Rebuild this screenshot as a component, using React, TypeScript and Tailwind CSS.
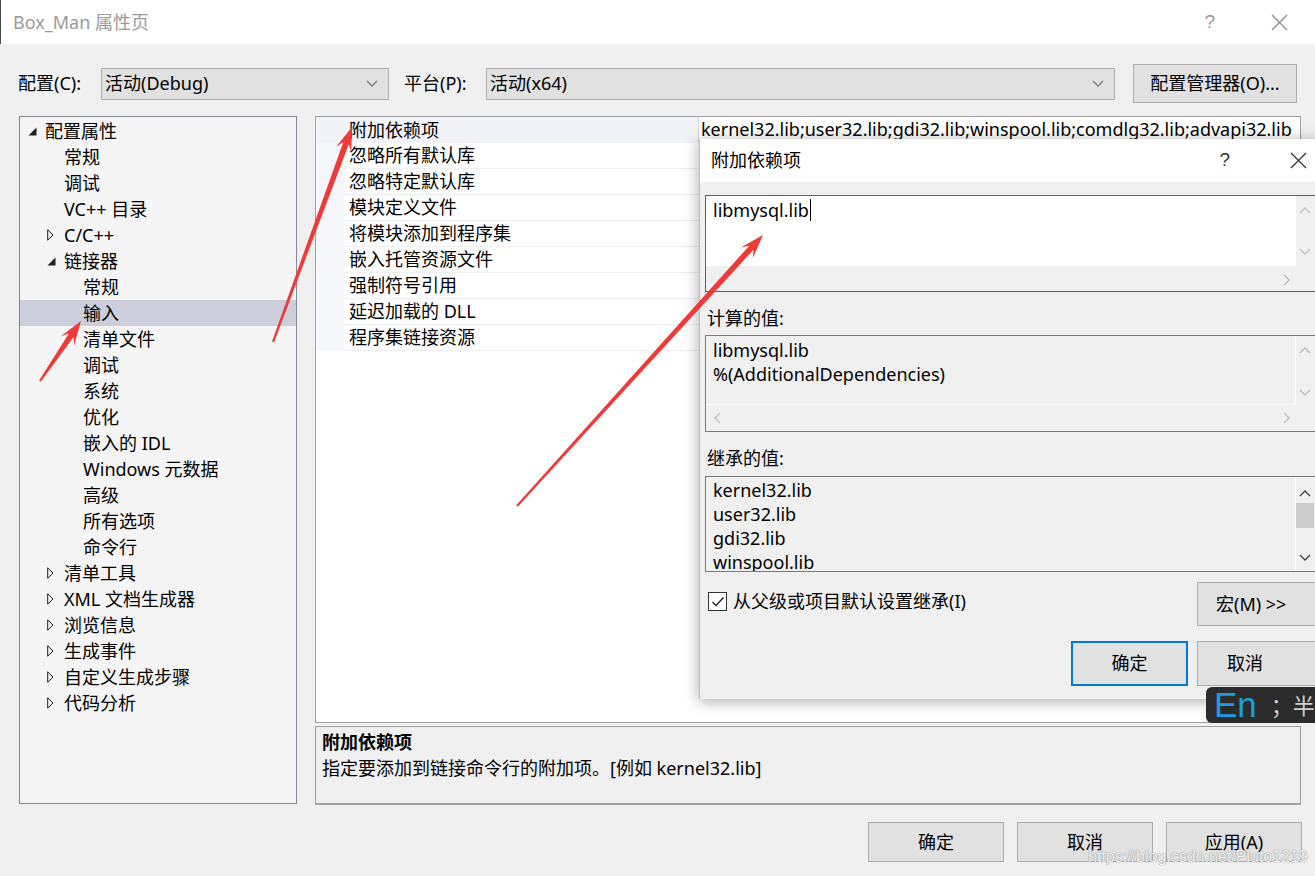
import React from "react";

type Dir = "up" | "down" | "left" | "right";
function Chev({ dir, color }: { dir: Dir; color: string }) {
  const pts = {
    up: "1,7 6,2 11,7",
    down: "1,2 6,7 11,2",
    left: "7,1 2,6 7,11",
    right: "2,1 7,6 2,11",
  }[dir];
  const horiz = dir === "up" || dir === "down";
  return (
    <svg width={horiz ? 12 : 9} height={horiz ? 9 : 12} viewBox={horiz ? "0 0 12 9" : "0 0 9 12"}>
      <polyline points={pts} fill="none" stroke={color} strokeWidth="1.3" />
    </svg>
  );
}

function XIcon({ color, size = 17 }: { color: string; size?: number }) {
  return (
    <svg width={size} height={size} viewBox="0 0 17 17">
      <line x1="1" y1="1" x2="16" y2="16" stroke={color} strokeWidth="1.2" />
      <line x1="16" y1="1" x2="1" y2="16" stroke={color} strokeWidth="1.2" />
    </svg>
  );
}

function arrowPoints(tx: number, ty: number, px: number, py: number) {
  const dx = px - tx;
  const dy = py - ty;
  const len = Math.hypot(dx, dy);
  const ux = dx / len;
  const uy = dy / len;
  const nx = -uy;
  const ny = ux;
  const headLen = 24;
  const hw = 8;
  const neckX = px - ux * headLen * 0.72;
  const neckY = py - uy * headLen * 0.72;
  const bx = px - ux * headLen;
  const by = py - uy * headLen;
  const w0 = 1.1;
  const w1 = 2.9;
  const p = [
    [tx + nx * w0, ty + ny * w0],
    [neckX + nx * w1, neckY + ny * w1],
    [bx + nx * hw, by + ny * hw],
    [px, py],
    [bx - nx * hw, by - ny * hw],
    [neckX - nx * w1, neckY - ny * w1],
    [tx - nx * w0, ty - ny * w0],
  ];
  return p.map((q) => q[0].toFixed(1) + "," + q[1].toFixed(1)).join(" ");
}

type TreeItem = { label: string; level: number; toggle?: "open" | "closed"; selected?: boolean };
const tree: TreeItem[] = [
  { label: "配置属性", level: 0, toggle: "open" },
  { label: "常规", level: 1 },
  { label: "调试", level: 1 },
  { label: "VC++ 目录", level: 1 },
  { label: "C/C++", level: 1, toggle: "closed" },
  { label: "链接器", level: 1, toggle: "open" },
  { label: "常规", level: 2 },
  { label: "输入", level: 2, selected: true },
  { label: "清单文件", level: 2 },
  { label: "调试", level: 2 },
  { label: "系统", level: 2 },
  { label: "优化", level: 2 },
  { label: "嵌入的 IDL", level: 2 },
  { label: "Windows 元数据", level: 2 },
  { label: "高级", level: 2 },
  { label: "所有选项", level: 2 },
  { label: "命令行", level: 2 },
  { label: "清单工具", level: 1, toggle: "closed" },
  { label: "XML 文档生成器", level: 1, toggle: "closed" },
  { label: "浏览信息", level: 1, toggle: "closed" },
  { label: "生成事件", level: 1, toggle: "closed" },
  { label: "自定义生成步骤", level: 1, toggle: "closed" },
  { label: "代码分析", level: 1, toggle: "closed" },
];

const props = [
  "附加依赖项",
  "忽略所有默认库",
  "忽略特定默认库",
  "模块定义文件",
  "将模块添加到程序集",
  "嵌入托管资源文件",
  "强制符号引用",
  "延迟加载的 DLL",
  "程序集链接资源",
];

function Toggle({ kind }: { kind: "open" | "closed" }) {
  if (kind === "open")
    return (
      <svg width="9" height="9" viewBox="0 0 9 9">
        <polygon points="0.5,8.5 8.5,8.5 8.5,0.5" fill="#1e1e1e" />
      </svg>
    );
  return (
    <svg width="7" height="12" viewBox="0 0 7 12">
      <polygon points="0.7,0.8 6,6 0.7,11.2" fill="none" stroke="#1e1e1e" strokeWidth="1" />
    </svg>
  );
}

export default function App() {
  const paddingFor = (lvl: number) => (lvl === 0 ? "pl-[6px]" : lvl === 1 ? "pl-[25px]" : "pl-[44px]");
  return (
    <div className="relative w-[1315px] h-[876px] overflow-hidden bg-[#f0f0f0] text-[#000] text-[18px] font-['Noto_Sans','Noto_Sans_CJK_SC',sans-serif]">
      {/* Title bar */}
      <div className="h-[44px] bg-white flex items-center pl-[12px] border-l border-[#4a4a4a]">
        <span className="text-[#9a9a9a] text-[18px]">Box_Man 属性页</span>
        <span className="ml-auto text-[#9a9a9a] text-[19px] mr-[56px] font-['Liberation_Sans',sans-serif]">?</span>
        <span className="mr-[27px] flex items-center">
          <XIcon color="#8a8a8a" />
        </span>
      </div>

      {/* Config row */}
      <div className="mt-[20px] h-[39px] flex items-center pl-[18px]">
        <span className="w-[83px]">配置(C):</span>
        <div className="w-[288px] h-[32px] bg-[#e1e1e1] border border-[#adadad] flex items-center pl-[3px] pr-[10px]">
          <span>活动(Debug)</span>
          <span className="ml-auto flex">
            <Chev dir="down" color="#7a7a7a" />
          </span>
        </div>
        <span className="ml-[15px] w-[82px]">平台(P):</span>
        <div className="w-[629px] h-[32px] bg-[#e1e1e1] border border-[#adadad] flex items-center pl-[3px] pr-[10px]">
          <span>活动(x64)</span>
          <span className="ml-auto flex">
            <Chev dir="down" color="#7a7a7a" />
          </span>
        </div>
        <div className="ml-[18px] w-[164px] h-[39px] bg-[#e1e1e1] border border-[#adadad] flex items-center justify-center">
          配置管理器(O)...
        </div>
      </div>

      {/* Main */}
      <div className="mt-[13px] flex pl-[19px] gap-[18px]">
        {/* Tree */}
        <div className="w-[278px] h-[688px] bg-[#f5f5f5] border border-[#828790] pt-[1px]">
          {tree.map((t, i) => (
            <div
              key={i}
              className={`h-[26px] flex items-center ${paddingFor(t.level)} ${t.selected ? "bg-[#cccedb]" : ""}`}
            >
              <span className="w-[19px] flex items-center pl-[2px]">{t.toggle ? <Toggle kind={t.toggle} /> : null}</span>
              <span className="whitespace-nowrap">{t.label}</span>
            </div>
          ))}
        </div>

        {/* Right column */}
        <div className="w-[986px] flex flex-col">
          <div className="h-[607px] bg-white border border-[#a0a0a0] flex flex-col">
            {props.map((p, i) => (
              <div key={i} className={`h-[26px] flex ${i === 0 ? "bg-[#f1f3f8]" : ""}`}>
                <div className={`w-[28px] ${i === 0 ? "" : "bg-[#f5f7fa]"}`} />
                <div
                  className={`w-[354px] pl-[5px] flex items-center whitespace-nowrap ${
                    i === 0 ? "" : "border-b border-[#eef0f4]"
                  }`}
                >
                  {p}
                </div>
                <div
                  className={`flex-1 flex items-center pl-[2px] whitespace-nowrap overflow-hidden ${
                    i === 0 ? "bg-white border-l border-b border-[#d6d6d6]" : "border-b border-[#eef0f4]"
                  }`}
                >
                  {i === 0 ? "kernel32.lib;user32.lib;gdi32.lib;winspool.lib;comdlg32.lib;advapi32.lib" : ""}
                </div>
              </div>
            ))}
          </div>
          <div className="mt-[3px] h-[79px] bg-[#f0f0f0] border border-[#a0a0a0] border-b-2 pl-[6px] pt-[2px] leading-[26px]">
            <div className="font-bold">附加依赖项</div>
            <div>指定要添加到链接命令行的附加项。[例如 kernel32.lib]</div>
          </div>
        </div>
      </div>

      {/* Bottom buttons */}
      <div className="mt-[17px] flex justify-end pr-[13px] gap-[13px]">
        {["确定", "取消", "应用(A)"].map((b) => (
          <div key={b} className="w-[136px] h-[40px] bg-[#e1e1e1] border border-[#adadad] flex items-center justify-center">
            {b}
          </div>
        ))}
      </div>

      {/* Watermark */}
      <div className="absolute left-[1088px] top-[845px] text-[16px] text-[#f4f4f4] [text-shadow:0_0_1px_#8a8a8a,0_0_1px_#8a8a8a] font-['Liberation_Sans',sans-serif] whitespace-nowrap">
        https://blog.csdn.net/Pluto1219
      </div>

      {/* Dialog */}
      <div className="absolute left-[699px] top-[139px] w-[620px] h-[560px] bg-[#f0f0f0] border-l border-[#bdbdbd] shadow-[0_2px_14px_rgba(0,0,0,0.35)]">
        <div className="h-[43px] bg-white flex items-center pl-[11px]">
          <span>附加依赖项</span>
          <span className="ml-auto mr-[60px] text-[19px] text-[#333] font-['Liberation_Sans',sans-serif]">?</span>
          <span className="mr-[12px] flex items-center">
            <XIcon color="#333" />
          </span>
        </div>
        <div className="pl-[5px]">
          {/* Edit box */}
          <div className="mt-[13px] w-[620px] h-[97px] border border-[#0078d7] flex flex-col">
            <div className="h-[70px] flex">
              <div className="w-[590px] bg-white pl-[7px] pt-[2px] leading-[24px] flex items-start">
                <span>libmysql.lib</span>
                <span className="inline-block w-[1px] h-[22px] bg-black ml-[1px] mt-[1px]" />
              </div>
              <div className="w-[18px] flex flex-col items-center justify-between py-[10px]">
                <Chev dir="up" color="#c4c4c4" />
                <Chev dir="down" color="#c4c4c4" />
              </div>
            </div>
            <div className="flex-1 flex items-center justify-between pl-[8px] pr-[33px] pt-[2px]">
              <span />
              <Chev dir="right" color="#b8b8b8" />
            </div>
          </div>

          <div className="mt-[14px] leading-[24px] pl-[2px]">计算的值:</div>
          <div className="mt-[5px] w-[620px] h-[97px] border border-[#7a7a7a] flex flex-col">
            <div className="h-[69px] flex">
              <div className="w-[590px] border-r border-b border-white pl-[7px] pt-[2px] leading-[24px]">
                <div>libmysql.lib</div>
                <div>%(AdditionalDependencies)</div>
              </div>
              <div className="w-[18px] flex flex-col items-center justify-between pt-[10px] pb-[8px]">
                <Chev dir="up" color="#bdbdbd" />
                <Chev dir="down" color="#bdbdbd" />
              </div>
            </div>
            <div className="flex-1 flex items-center justify-between pl-[7px] pr-[33px]">
              <Chev dir="left" color="#bdbdbd" />
              <Chev dir="right" color="#bdbdbd" />
            </div>
          </div>

          <div className="mt-[14px] leading-[24px] pl-[2px]">继承的值:</div>
          <div className="mt-[6px] w-[620px] h-[96px] border border-[#7a7a7a] flex">
            <div className="w-[590px] pl-[7px] pt-[1px] leading-[24px] overflow-hidden border-r border-white">
              <div>kernel32.lib</div>
              <div>user32.lib</div>
              <div>gdi32.lib</div>
              <div>winspool.lib</div>
            </div>
            <div className="w-[18px] flex flex-col items-center pt-[12px]">
              <Chev dir="up" color="#404040" />
              <div className="mt-[5px] w-[18px] h-[25px] bg-[#cdcdcd]" />
              <div className="mt-[25px]">
                <Chev dir="down" color="#404040" />
              </div>
            </div>
          </div>

          <div className="mt-[10px] flex items-start">
            <div className="flex items-center mt-[6px] ml-[3px]">
              <div className="w-[19px] h-[19px] bg-white border border-[#333] flex items-center justify-center">
                <svg width="14" height="12" viewBox="0 0 14 12">
                  <polyline points="1.5,6 5,9.5 12.5,1.5" fill="none" stroke="#222" strokeWidth="1.4" />
                </svg>
              </div>
              <span className="ml-[6px]">从父级或项目默认设置继承(I)</span>
            </div>
            <div className="ml-auto w-[122px] h-[44px] bg-[#e1e1e1] border border-[#adadad] flex items-center pl-[18px]">
              宏(M) &gt;&gt;
            </div>
          </div>

          <div className="mt-[15px] flex justify-end gap-[9px]">
            <div className="w-[117px] h-[45px] bg-[#e1e1e1] border-2 border-[#0078d7] flex items-center justify-center">确定</div>
            <div className="w-[122px] h-[45px] bg-[#e1e1e1] border border-[#adadad] flex items-center pl-[29px]">取消</div>
          </div>
        </div>
      </div>

      {/* IME indicator */}
      <div className="absolute left-[1206px] top-[687px] w-[115px] h-[36px] bg-[#2b2b2b] rounded-l-[6px] flex items-center pl-[8px] overflow-hidden">
        <span className="text-[#1c9be4] text-[35px] leading-none font-['Liberation_Sans',sans-serif] -mt-[1px]">En</span>
        <span className="ml-[14px] text-[#cfcfcf] text-[22px] leading-none">；半</span>
      </div>

      {/* Red annotation arrows */}
      <svg className="absolute left-0 top-0 pointer-events-none" width="1315" height="876" viewBox="0 0 1315 876">
        <polygon points={arrowPoints(40, 381, 81, 321)} fill="#f03a3a" />
        <polygon points={arrowPoints(273, 342, 352, 127)} fill="#f03a3a" />
        <polygon points={arrowPoints(517, 506, 763, 235)} fill="#f03a3a" />
      </svg>
    </div>
  );
}
